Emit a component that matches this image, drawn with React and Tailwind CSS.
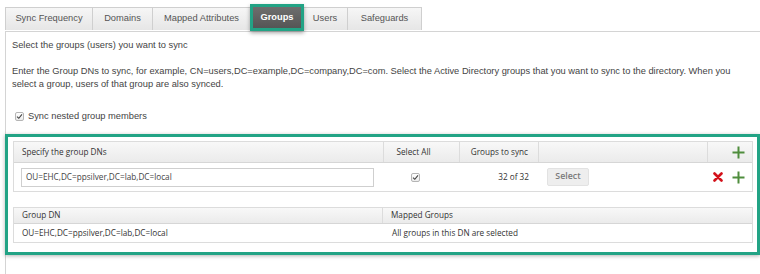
import React from 'react';

const tabs = [
  { label: 'Sync Frequency', w: 'w-[88px]' },
  { label: 'Domains', w: 'w-[60px]' },
  { label: 'Mapped Attributes', w: 'w-[98px]' },
  { label: 'Groups', w: 'w-[52px]', active: true },
  { label: 'Users', w: 'w-[45px]' },
  { label: 'Safeguards', w: 'w-[74px]' },
];

const CheckBox = () => (
  <span className="inline-flex w-[9px] h-[9px] items-center justify-center border border-[#b5b5b5] rounded-[2px] bg-gradient-to-b from-white to-[#ececec]">
    <svg width="7" height="7" viewBox="0 0 7 7">
      <path d="M1 3.6 L2.8 5.3 L6 1.4" fill="none" stroke="#444" strokeWidth="1.1" />
    </svg>
  </span>
);

const Plus = () => (
  <svg width="13" height="13" viewBox="0 0 13 13">
    <path d="M6.5 0.5 V12.5 M0.5 6.5 H12.5" stroke="#4f8d3d" strokeWidth="2" />
  </svg>
);

const Cross = () => (
  <svg width="10" height="10" viewBox="0 0 10 10">
    <path d="M1.5 1.5 L8.5 8.5 M8.5 1.5 L1.5 8.5" stroke="#d3111a" strokeWidth="2.6" strokeLinecap="round" />
  </svg>
);

const headCell = 'flex items-center border-r border-[#dcdcdc] bg-gradient-to-b from-[#f8f8f8] to-[#ebebeb]';

export default function App() {
  return (
    <div className="w-[760px] h-[274px] overflow-hidden bg-white text-[#444] font-['Liberation_Sans',Arial,sans-serif] text-[9.3px]">
      {/* Tabs */}
      <div className="flex pl-[5px] pt-[7px] h-[31px]">
        {tabs.map((t) =>
          t.active ? (
            <div key={t.label} className={`${t.w} h-[24px] -mt-[2px] relative z-10`}>
              <div className="absolute -inset-x-[1px] -top-[1px] h-[27px] border-[3px] border-[#22a385] bg-gradient-to-b from-[#6e6e6e] to-[#555] shadow-[0_2px_4px_rgba(0,0,0,0.35)] flex items-center justify-center text-white font-bold">
                {t.label}
              </div>
            </div>
          ) : (
            <div
              key={t.label}
              className={`${t.w} h-[23px] flex items-center justify-center border-t border-r border-[#cfcfcf] first:border-l bg-gradient-to-b from-[#f6f6f6] to-[#e6e6e6] text-[#555]`}
            >
              {t.label}
            </div>
          )
        )}
      </div>

      {/* Panel */}
      <div className="ml-[5px] border-l border-t border-[#d4d4d4] h-[250px]">
        <p className="px-[6px] pt-[7px] leading-[13px]">Select the groups (users) you want to sync</p>
        <p className="px-[6px] mt-[13px] leading-[13px] w-[752px]">
          Enter the Group DNs to sync, for example, CN=users,DC=example,DC=company,DC=com. Select the Active Directory groups that you want to sync to the directory. When you select a group, users of that group are also synced.
        </p>
        <div className="px-[9px] mt-[19px] flex items-center gap-[4px] leading-[13px]">
          <CheckBox />
          <span>Sync nested group members</span>
        </div>

        {/* Highlighted group DN section */}
        <div className="mt-[11px] -ml-px w-[755px] border-[3px] border-[#22a385] shadow-[0_1px_4px_rgba(0,0,0,0.3)] pl-[5px] pr-[4px] pt-[4px] pb-[9px] font-['Open_Sans',sans-serif] text-[8.2px] text-[#333]">
          <div className="border border-[#dcdcdc]">
            <div className="flex h-[21px] border-b border-[#d6d6d6]">
              <div className={`${headCell} w-[370px] pl-[8px]`}>Specify the group DNs</div>
              <div className={`${headCell} w-[76px] justify-center pr-[16px]`}>Select All</div>
              <div className={`${headCell} w-[79px] justify-end pr-[10px]`}>Groups to sync</div>
              <div className={`${headCell} w-[169px]`}></div>
              <div className={`${headCell} flex-1 justify-end pr-[7px] border-r-0`}>
                <Plus />
              </div>
            </div>
            <div className="flex h-[28px] items-center">
              <div className="w-[370px] pl-[7px]">
                <div className="w-[353px] h-[19px] border border-[#cfcfcf] flex items-center pl-[4px] text-[#444]">
                  OU=EHC,DC=ppsilver,DC=lab,DC=local
                </div>
              </div>
              <div className="w-[76px] flex justify-center pr-[14px]">
                <CheckBox />
              </div>
              <div className="w-[79px] flex justify-end pr-[10px]">32 of 32</div>
              <div className="w-[169px] pl-[8px]">
                <span className="inline-flex h-[18px] w-[42px] items-center justify-center bg-[#eeeeee] border border-[#e2e2e2] rounded-[2px] font-semibold text-[#7a7a7a] text-[8.8px]">
                  Select
                </span>
              </div>
              <div className="flex-1 flex items-center justify-end gap-[9px] pr-[7px]">
                <Cross />
                <Plus />
              </div>
            </div>
          </div>

          <div className="mt-[15px] border border-[#dcdcdc]">
            <div className="flex h-[16px] border-b border-[#d6d6d6]">
              <div className={`${headCell} w-[369px] pl-[8px]`}>Group DN</div>
              <div className={`${headCell} flex-1 pl-[8px] border-r-0`}>Mapped Groups</div>
            </div>
            <div className="flex h-[18px] items-center">
              <div className="w-[369px] pl-[8px]">OU=EHC,DC=ppsilver,DC=lab,DC=local</div>
              <div className="flex-1 pl-[9px]">All groups in this DN are selected</div>
            </div>
          </div>
        </div>
      </div>
    </div>
  );
}
